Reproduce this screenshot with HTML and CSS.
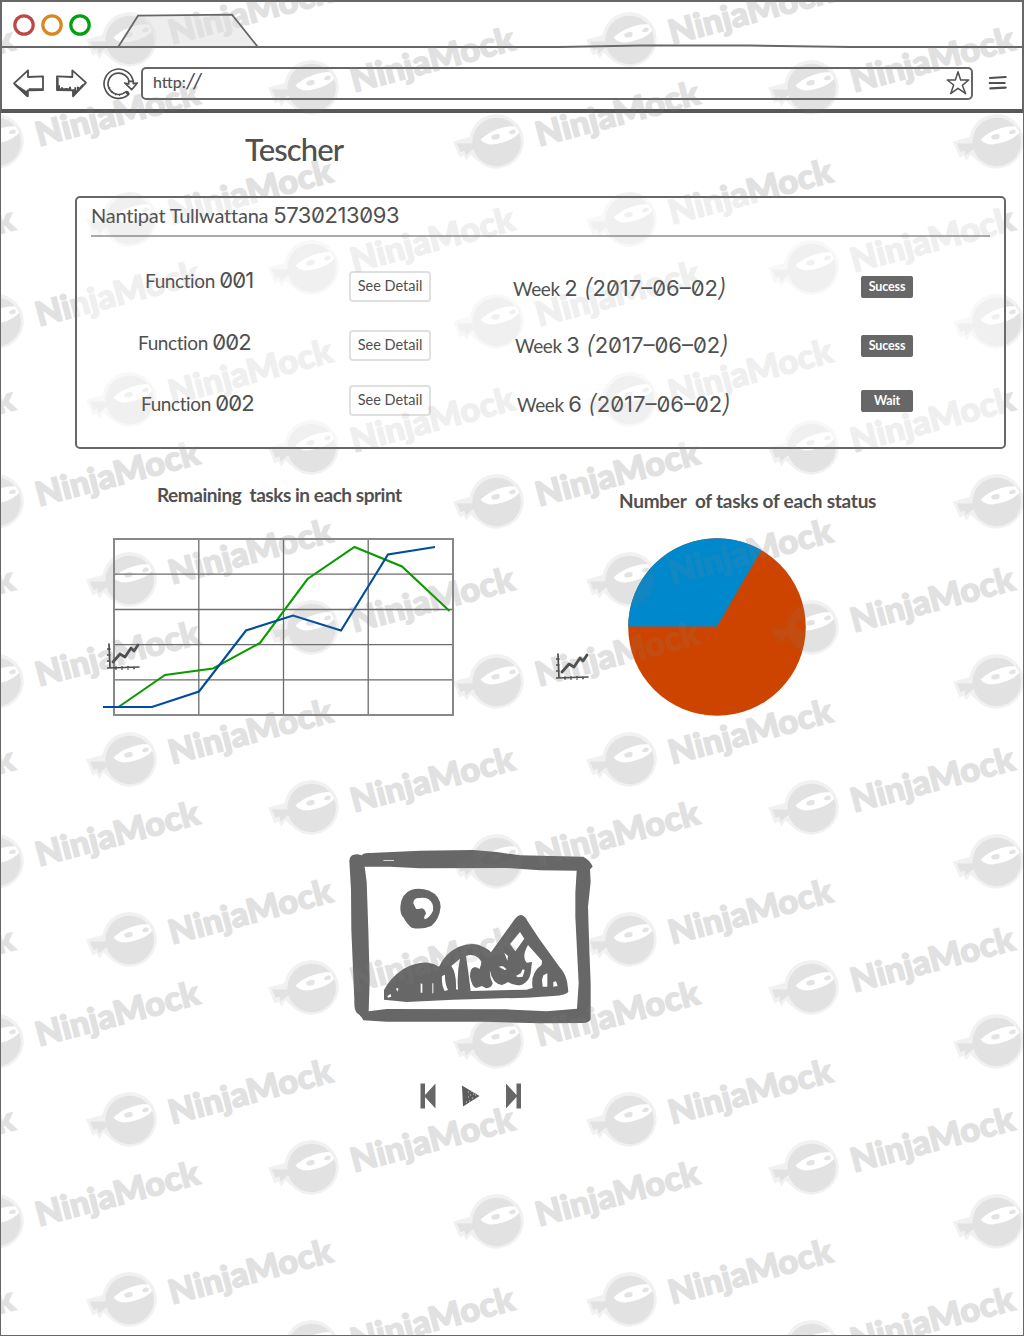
FILE: index.html
```html
<!DOCTYPE html>
<html lang="en">
<head>
<meta charset="utf-8">
<title>Tescher</title>
<link rel="stylesheet" href="styles.css">
</head>
<body>
<svg class="watermark watermark-under" width="1024" height="1336" aria-hidden="true">
  <defs>
    <g id="ninja">
      <path class="wm-ring" fill-rule="evenodd" d="M-43.500 0-27-4.500A27.300 27.300 0 1 1-20 18.500L-26 13-30 19-33 14-37 16ZM-16-2Q-2-15 19-15.500 24-14 23.500-10 17 0-4 3-12 3-16-2Z"/>
      <path class="wm-ink" fill-rule="evenodd" d="M-24 2A24.200 24.200 0 1 1-23 7.500L-31 14-32 9-36 10.500-39.500 2ZM-16-2Q-2-15 19-15.500 24-14 23.500-10 17 0-4 3-12 3-16-2Z"/>
      <path class="wm-eye" d="M-5-5.500Q-1-8.500 3-7V-4Q2-2-3-2-6-3-5-5.500ZM13-10Q16-13 19-11.500V-8.500Q17-7 14-7.500Q12-8 13-10Z"/>
      <text class="wm-text" x="0" y="0" textLength="168" lengthAdjust="spacingAndGlyphs" transform="translate(42.500 5) rotate(-14.800)">NinjaMock</text>
    </g>
    <g id="trio">
      <use href="#ninja" x="129.500" y="39.500"/>
      <use href="#ninja" x="311.500" y="87.500"/>
      <use href="#ninja" x="-3.500" y="141.500"/>
    </g>
    <g id="trio-row">
      <use href="#trio" x="-500"/><use href="#trio"/><use href="#trio" x="500"/><use href="#trio" x="1000"/>
    </g>
    <g id="sheet">
      <use href="#trio-row" y="-180"/><use href="#trio-row"/><use href="#trio-row" y="180"/>
      <use href="#trio-row" y="360"/><use href="#trio-row" y="540"/><use href="#trio-row" y="720"/>
      <use href="#trio-row" y="900"/><use href="#trio-row" y="1080"/><use href="#trio-row" y="1260"/>
    </g>
    <g id="trend">
      <path d="M2 1 3 25M0 25 32 24M0 6H3M0 12H3M0 18H3M9 24V26M15 24V26M21 24V26M27 24V25.500" stroke-width="1.700"/>
      <path d="M6 19 13 11 18 14 24 5 27 8 31 2" stroke-width="2.800"/>
    </g>
  </defs>
  <use href="#sheet"/>
</svg>

<header class="browser">
  <svg class="tabstrip" width="1020" height="46" viewBox="2 2 1020 46">
    <g fill="none" stroke-width="3.200">
      <circle cx="24" cy="25" r="9.200" stroke="#b94a48"/>
      <circle cx="52" cy="25" r="9.200" stroke="#da8720"/>
      <circle cx="80" cy="25" r="9.200" stroke="#00a010"/>
    </g>
    <path d="M118.500 46.500 138 15.700 232 14.700 257.500 46.500" fill="#eee" stroke="#676767" stroke-width="1.800"/>
    <path d="M2 47H560L640 45.500H750L850 47H1022" fill="none" stroke="#676767" stroke-width="1.900"/>
  </svg>
  <div class="toolbar">
    <svg class="ic-back" width="34" height="32" viewBox="36 204 102 96" fill="none" stroke="#505050" stroke-width="5.500" stroke-linejoin="round">
      <path d="M42 250 84 211V231L129 229V270L83 271V289Z"/>
      <path d="M46 254 82 287V272M50 258 80 278M86 268H126" stroke-width="7"/>
    </svg>
    <svg class="ic-forward" width="34" height="32" viewBox="165 204 102 96" fill="none" stroke="#505050" stroke-width="5.500" stroke-linejoin="round">
      <path d="M171 229 217 231V211L258 248 219 289V271L171 270Z"/>
      <path d="M173 234V268H214M177 256V268M186 262V268M199 264V268M210 260V268M221 268V284L250 254M226 262V278M234 260V270" stroke-width="6"/>
    </svg>
    <svg class="ic-reload" width="36" height="32" viewBox="309 204 108 96" fill="none" stroke="#505050" stroke-linejoin="round">
      <path d="M380 281A38 38 0 1 1 394 248" stroke-width="17" stroke-linecap="round"/>
      <path d="M379 281.500A38 38 0 1 1 394 249" stroke="#fff" stroke-width="7"/>
      <path d="M374 249 386 252V244H400V251L412 249 395 269Z" fill="#fff" stroke-width="5"/>
      <path d="M325 266 331 263M334 278 338 273M346 286 348 280M359 288V282" stroke-width="3"/>
    </svg>
    <div class="address">
      <span class="url">http:<i>//</i></span>
      <svg width="24" height="26" viewBox="786 211 72 78" fill="none" stroke="#505050" stroke-width="4.500" stroke-linejoin="round">
        <path d="M822 216 830 241 854 241 835 257 845 282 822 266 800 282 809 256 790 241 814 241Z"/>
      </svg>
    </div>
    <svg class="ic-menu" width="20" height="16" viewBox="912 225 60 48" fill="none" stroke="#505050" stroke-width="6.500" stroke-linecap="round">
      <path d="M918 234 965 231M917 249H962M919 265 965 263"/>
    </svg>
  </div>
</header>

<main class="page">
  <h1>Tescher</h1>

  <section class="panel">
    <h2>Nantipat Tullwattana <span class="num">5730213093</span></h2>
    <div class="row row-1">
      <span class="task">Function <span class="num">001</span></span>
      <span class="button">See Detail</span>
      <span class="week">Week <span class="num">2 <i>(</i>2017–06–02<i>)</i></span></span>
      <span class="badge">Sucess</span>
    </div>
    <div class="row row-2">
      <span class="task">Function <span class="num">002</span></span>
      <span class="button">See Detail</span>
      <span class="week">Week <span class="num">3 <i>(</i>2017–06–02<i>)</i></span></span>
      <span class="badge">Sucess</span>
    </div>
    <div class="row row-3">
      <span class="task">Function <span class="num">002</span></span>
      <span class="button">See Detail</span>
      <span class="week">Week <span class="num">6 <i>(</i>2017–06–02<i>)</i></span></span>
      <span class="badge">Wait</span>
    </div>
  </section>

  <section class="charts">
    <div class="chart chart-line">
      <h3>Remaining  tasks in each sprint</h3>
      <svg width="360" height="182" viewBox="100 536 360 182" fill="none">
        <path d="M198.800 539V715M283.500 539V715M368.200 539V715M114 574.200H453M114 609.500H453M114 644.600H453M114 679.800H453" stroke="#6c6c6c" stroke-width="1.300"/>
        <rect x="114" y="539" width="339" height="176" stroke="#888" stroke-width="2"/>
        <path d="M118.500 707 165 675 213 668.500 260 643 307.500 579 354.500 547 402 566.500 449.500 611" stroke="#0a9b00" stroke-width="2.100"/>
        <path d="M103 707H152L199 691.500 246 630.500 293 615.500 341 630.500 388 554.500 435 547" stroke="#004c9f" stroke-width="2.100"/>
      </svg>
      <svg class="trend-icon" width="34" height="28" viewBox="0 0 34 28" fill="none" stroke="#4b4b4b" stroke-linecap="round" stroke-linejoin="round"><use href="#trend"/></svg>
    </div>
    <div class="chart chart-pie">
      <h3>Number  of tasks of each status</h3>
      <svg width="178" height="178" viewBox="-89 -89 178 178">
        <circle r="88.800" fill="#cc4400"/>
        <path d="M0-.500H-88.800A88.800 88.800 0 0 1 44.400-76.900Z" fill="#0088cc"/>
      </svg>
      <svg class="trend-icon" width="34" height="28" viewBox="0 0 34 28" fill="none" stroke="#4b4b4b" stroke-linecap="round" stroke-linejoin="round"><use href="#trend"/></svg>
    </div>
  </section>

  <section class="player">
    <svg width="260" height="190" viewBox="0 0 780 570" fill="#676767">
      <path fill-rule="evenodd" d="M28 62Q30 42 52 43L66 46Q70 38 90 39L240 32 400 30 470 36 540 46 730 50Q750 60 758 80L750 88 752 125 744 200 748 330 752 430V536Q750 548 728 549L600 550 430 545 140 545 70 541Q63 526 50 518 42 508 43 480L34 270 33 150ZM74 80 80 125 85 270 89 420 86 514 140 507 500 508 620 514 711 506 716 430 706 230 706 160 710 92 600 91 500 84 240 85 150 80ZM130 60V62H162V60Z"/>
      <path fill-rule="evenodd" d="M181 200Q184 160 215 149 240 142 268 152 300 166 302 200 298 238 274 258 244 270 215 263 200 252 190 232 180 222 181 200ZM220 190Q220 178 230 175 252 170 265 177 282 188 279 212 270 232 254 238 250 230 258 222 256 208 246 205 234 209 228 206Z"/>
      <path d="M132 479V450Q150 414 190 387 230 364 265 368 285 371 297 380 315 340 355 321 400 302 432 322 445 328 453 337L524 238Q534 225 544 225 556 228 562 242L596 294 658 380Q678 402 682 430L685 455Q680 465 640 468L560 473 340 479 200 486Z"/>
      <path fill="#fff" d="M242 430V458H247V432ZM277 430V460H280V430ZM306 408Q304 435 314 453L324 450Q314 430 315 404ZM334 378Q350 400 348 448L354 449Q350 400 360 356ZM378 348Q390 342 404 347 420 354 424 366 424 376 418 388 414 380 402 382 390 385 390 410 396 440 408 444L426 438 438 445Q456 444 458 430 448 410 450 392 456 430 486 435 498 430 504 426 524 440 546 434 568 424 572 400L576 366 560 368Q544 350 564 315L606 362 605 374Q570 400 578 444L560 449 392 453Q386 400 378 348ZM510 312 540 276 553 296 526 334ZM493 338 504 348 502 362ZM528 408 542 400 548 388 554 390 548 410 534 412ZM606 420 610 406 622 400 622 440H608ZM640 426 648 424 653 438 640 440ZM476 380 488 378 500 388 494 390ZM167 446 175 444 174 455ZM142 468 152 462 154 470 144 473Z"/>
    </svg>
    <div class="controls">
      <svg width="17" height="26" viewBox="0 0 17 26" fill="#666"><path d="M.500.500H5V12L15.500.500V25.500L5 14V25.500H.500Z"/></svg>
      <svg width="19" height="22" viewBox="0 0 19 22"><path d="M0 .500 17.500 11 1 21.500Z" fill="#5c5c5c"/><path d="M6 7H7M9 6H10M8 10H9M11 9H12M6 12H7M10 13H11M13 10H14M7 16H8M4 17H5M10 16H11" stroke="#ddd" stroke-width=".900"/></svg>
      <svg width="17" height="26" viewBox="0 0 17 26" fill="#666"><path d="M16 .500H11.500V12L1 .500V25.500L11.500 14V25.500H16Z"/></svg>
    </div>
  </section>
</main>

<svg class="watermark watermark-over" width="1024" height="1336" aria-hidden="true"><use href="#sheet"/></svg>
</body>
</html>
```
FILE: styles.css
```css
* { box-sizing: border-box; }

body {
  position: relative;
  width: 1024px;
  height: 1336px;
  margin: 0;
  overflow: hidden;
  background: #fff;
  color: #505050;
  font-family: Lato, "Open Sans", sans-serif;
}

svg { display: block; flex: none; }
h1, h2, h3 { margin: 0; }

/* Repeating brand mark, one sheet below the content and one above it */
.watermark { position: absolute; top: 0; left: 0; pointer-events: none; }
.watermark-under { z-index: 0; }
.watermark-over { z-index: 2; }
.wm-ring { fill: rgba(136, 136, 136, 0.055); }
.wm-ink { fill: rgba(136, 136, 136, 0.07); }
.wm-eye, .wm-text { fill: #888; opacity: 0.125; }
.wm-text {
  font: 900 33.5px Lato, "Open Sans", sans-serif;
  stroke: #888;
  stroke-width: 1.5px;
}

/* Browser chrome */
.browser {
  position: relative;
  z-index: 1;
  height: 113px;
  border: 2px solid #676767;
  border-bottom: 4px solid #585858;
}
.toolbar { display: flex; align-items: flex-start; padding: 19px 0 0 10px; }
.toolbar svg { margin-top: 1px; }
.ic-forward { margin-left: 9px; }
.ic-reload { margin-left: 14px; }
.address {
  display: flex;
  justify-content: space-between;
  width: 832px;
  height: 33px;
  margin-left: 2px;
  padding: 0 1px 0 10px;
  border: 2px solid #676767;
  border-radius: 5px;
}
.address svg { margin-top: 1px; }
.url { font-size: 16px; line-height: 25px; font-weight: 500; }
.url i { font-size: 21px; line-height: 0; letter-spacing: 2.5px; }
.toolbar .ic-menu { margin: 8px 0 0 15px; }

/* Page */
.page {
  position: relative;
  z-index: 1;
  height: 1223px;
  border: 1px solid #676767;
  border-top: 0;
}
h1 {
  padding: 18px 0 0 244px;
  font-size: 31px;
  font-weight: 500;
  line-height: 36px;
  letter-spacing: -0.9px;
}

.num {
  font-family: Inter, "DejaVu Sans", sans-serif;
  font-size: 22px;
  font-weight: 400;
  line-height: 0;
  font-feature-settings: "zero" 1;
}
.num i { font-size: 25px; font-weight: 300; }

/* Student panel */
.panel {
  width: 931px;
  height: 253px;
  margin: 29px 0 0 74px;
  padding: 0 14px;
  border: 2px solid #676767;
  border-radius: 5px;
  background: #fff;
}
.panel h2 {
  height: 39px;
  margin-bottom: 28px;
  padding-top: 5px;
  border-bottom: 2px solid #aaa;
  font-size: 20px;
  font-weight: 400;
  line-height: 24px;
  letter-spacing: -0.22px;
  white-space: nowrap;
}
.panel h2 .num { letter-spacing: -0.4px; }
.row {
  display: grid;
  grid-template-columns: 258px 164px 348px 52px;
  align-items: start;
  height: 60px;
  font-size: 19px;
  line-height: 24px;
  letter-spacing: -0.4px;
  white-space: nowrap;
}
.row-2 { height: 55px; }
.row-3 { height: 50px; }
.task .num { letter-spacing: -0.9px; }
.week .num { letter-spacing: 0; }
.row-1 .task { padding: 4px 0 0 54px; }
.row-2 .task { padding: 6px 0 0 47px; }
.row-3 .task { padding: 12px 0 0 50px; }
.row-1 .week { padding-top: 12px; }
.row-2 .week { padding: 9px 0 0 2px; }
.row-3 .week { padding: 13px 0 0 4px; }

.button {
  width: 82px;
  height: 31px;
  margin-top: 5px;
  border: 2px solid #e0e0e0;
  border-radius: 4px;
  font-size: 14.5px;
  line-height: 25px;
  letter-spacing: 0;
  text-align: center;
}
.row-1 .button { margin-top: 6px; }
.badge {
  height: 22px;
  margin-top: 10px;
  border-radius: 2px;
  background: #676767;
  color: #fff;
  font-size: 12.5px;
  font-weight: 700;
  line-height: 22px;
  letter-spacing: -0.15px;
  text-align: center;
}
.row-1 .badge { margin-top: 11px; }

/* Charts */
.charts { display: flex; height: 300px; }
.chart { position: relative; }
.chart h3 { font-size: 19px; font-weight: 700; line-height: 26px; white-space: pre; }
.chart-line { width: 526px; padding: 33px 0 0 99px; }
.chart-line h3 { padding: 0 0 0 57px; margin-bottom: 28px; letter-spacing: -0.46px; }
.chart-pie { padding: 39px 0 0 101px; }
.chart-pie h3 { margin: 0 0 24px -9px; letter-spacing: -0.25px; }
.trend-icon { position: absolute; top: 194px; left: 106px; }
.chart-pie .trend-icon { top: 204px; left: 29px; }

/* Image player */
.player { width: 260px; margin: 91px 0 0 339px; }
.controls { display: flex; align-items: center; gap: 24.5px; margin: 53px 0 0 80px; }
```
